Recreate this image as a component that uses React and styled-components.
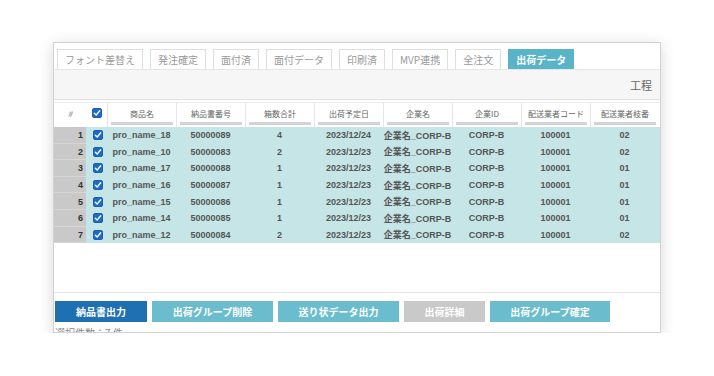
import React from "react";
import styled, { createGlobalStyle } from "styled-components";

const GlobalStyle = createGlobalStyle`
  html, body { margin: 0; padding: 0; background: #fff; }
  body { font-family: "Noto Sans CJK JP", "Noto Sans", sans-serif; }
`;

const Stage = styled.div`
  padding: 42px 0 0 53px;
`;

const Panel = styled.div`
  width: 608px;
  height: 291px;
  box-sizing: border-box;
  border: 1px solid #d2d2d2;
  box-shadow: 0 3px 14px rgba(0, 0, 0, 0.16);
  background: #fff;
  overflow: hidden;
  display: flex;
  flex-direction: column;
  & > * { flex-shrink: 0; }
`;

const TabBar = styled.div`
  display: flex;
  gap: 7px;
  padding: 6px 0 0 3px;
`;

const Tab = styled.div`
  height: 20px;
  box-sizing: border-box;
  padding: 0 7px;
  display: flex;
  align-items: center;
  border: 1px solid ${(p) => (p.$active ? "#5ab4c9" : "#dedede")};
  border-bottom: none;
  background: ${(p) => (p.$active ? "#5ab4c9" : "#fff")};
  color: ${(p) => (p.$active ? "#fff" : "#9a9a9a")};
  font-size: 10px;
  font-weight: ${(p) => (p.$active ? 700 : 400)};
  white-space: nowrap;
`;

const Toolbar = styled.div`
  height: 31px;
  box-sizing: border-box;
  background: #f6f6f6;
  border-top: 1px solid #e6e6e6;
  border-bottom: 1px solid #e0e0e0;
  display: flex;
  justify-content: flex-end;
  align-items: center;
  padding-right: 8px;
  font-size: 11px;
  color: #666;
`;

const TableArea = styled.div`
  margin-top: 2px;
  height: 191px;
  box-sizing: border-box;
  border-top: 1px solid #ececec;
  border-bottom: 1px solid #e4e4e4;
`;

const COLS = "32px 21px repeat(8, 69px)";

const HeaderRow = styled.div`
  display: grid;
  grid-template-columns: ${COLS};
  height: 24px;
`;

const HeadCell = styled.div`
  position: relative;
  display: flex;
  align-items: center;
  justify-content: center;
  padding-bottom: 4px;
  box-sizing: border-box;
  font-size: 8px;
  color: #666;
  white-space: nowrap;
  border-left: ${(p) => (p.$sep ? "1px solid #e6e6e6" : "none")};
  &::after {
    content: "";
    display: ${(p) => (p.$bar ? "block" : "none")};
    position: absolute;
    left: 3px;
    right: 3px;
    bottom: 2px;
    height: 3px;
    background: #d3d3d3;
  }
`;

const HashHead = styled(HeadCell)`
  font-style: italic;
  color: #888;
`;

const Row = styled.div`
  display: grid;
  grid-template-columns: ${COLS};
  height: 16.6px;
  background: #c6e5e6;
  font-family: "Liberation Sans", "Noto Sans CJK JP", sans-serif;
`;

const NumCell = styled.div`
  background: #c9c9c9;
  display: flex;
  align-items: center;
  justify-content: flex-end;
  padding-right: 3px;
  font-size: 9px;
  font-weight: 700;
  color: #333;
  box-shadow: inset 0 -1px 0 #d6d6d6;
`;

const BoxCell = styled.div`
  display: flex;
  align-items: center;
  justify-content: center;
  padding-left: 2px;
`;

const DataCell = styled.div`
  display: flex;
  align-items: center;
  justify-content: center;
  font-size: 9px;
  font-weight: 700;
  color: #555;
  white-space: nowrap;
`;

const CheckBox = styled.span`
  width: 10px;
  height: 10px;
  box-sizing: border-box;
  border-radius: 2px;
  background: #1c69c9;
  border: 1px solid #1a5fb4;
  display: inline-flex;
  align-items: center;
  justify-content: center;
`;

const ButtonBar = styled.div`
  display: flex;
  gap: 5px;
  padding: 8px 0 0 1px;
`;

const Button = styled.div`
  width: ${(p) => p.$w}px;
  height: 21px;
  display: flex;
  align-items: center;
  justify-content: center;
  font-size: 10px;
  font-weight: 700;
  color: #fff;
  background: ${(p) =>
    p.$variant === "primary" ? "#1e70b3" : p.$variant === "disabled" ? "#c9c9c9" : "#6bbdcd"};
`;

const Status = styled.div`
  margin-top: 3px;
  padding-left: 1px;
  font-size: 10px;
  color: #888;
  white-space: nowrap;
`;

const Check = () => (
  <CheckBox>
    <svg width="8" height="8" viewBox="0 0 8 8">
      <path d="M1.3 4.2 L3.2 6 L6.7 1.8" fill="none" stroke="#fff" strokeWidth="1.4" strokeLinecap="round" strokeLinejoin="round" />
    </svg>
  </CheckBox>
);

const tabs = ["フォント差替え", "発注確定", "面付済", "面付データ", "印刷済", "MVP連携", "全注文", "出荷データ"];
const heads = ["商品名", "納品書番号", "箱数合計", "出荷予定日", "企業名", "企業ID", "配送業者コード", "配送業者枝番"];
const rows = [
  ["pro_name_18", "50000089", "4", "2023/12/24", "02"],
  ["pro_name_10", "50000083", "2", "2023/12/23", "02"],
  ["pro_name_17", "50000088", "1", "2023/12/23", "01"],
  ["pro_name_16", "50000087", "1", "2023/12/23", "01"],
  ["pro_name_15", "50000086", "1", "2023/12/23", "01"],
  ["pro_name_14", "50000085", "1", "2023/12/23", "01"],
  ["pro_name_12", "50000084", "2", "2023/12/23", "02"],
];
const buttons = [
  { label: "納品書出力", w: 92, v: "primary" },
  { label: "出荷グループ削除", w: 121, v: "teal" },
  { label: "送り状データ出力", w: 121, v: "teal" },
  { label: "出荷詳細", w: 81, v: "disabled" },
  { label: "出荷グループ確定", w: 120, v: "teal" },
];

export default function App() {
  return (
    <>
      <GlobalStyle />
      <Stage>
        <Panel>
          <TabBar>
            {tabs.map((t, i) => (
              <Tab key={t} $active={i === tabs.length - 1}>
                {t}
              </Tab>
            ))}
          </TabBar>
          <Toolbar>工程</Toolbar>
          <TableArea>
            <HeaderRow>
              <HashHead>#</HashHead>
              <HeadCell>
                <Check />
              </HeadCell>
              {heads.map((h) => (
                <HeadCell key={h} $sep $bar>
                  {h}
                </HeadCell>
              ))}
            </HeaderRow>
            {rows.map((r, i) => (
              <Row key={i}>
                <NumCell>{i + 1}</NumCell>
                <BoxCell>
                  <Check />
                </BoxCell>
                <DataCell>{r[0]}</DataCell>
                <DataCell>{r[1]}</DataCell>
                <DataCell>{r[2]}</DataCell>
                <DataCell>{r[3]}</DataCell>
                <DataCell>企業名_CORP-B</DataCell>
                <DataCell>CORP-B</DataCell>
                <DataCell>100001</DataCell>
                <DataCell>{r[4]}</DataCell>
              </Row>
            ))}
          </TableArea>
          <ButtonBar>
            {buttons.map((b) => (
              <Button key={b.label} $w={b.w} $variant={b.v}>
                {b.label}
              </Button>
            ))}
          </ButtonBar>
          <Status>選択件数：7 件</Status>
        </Panel>
      </Stage>
    </>
  );
}
